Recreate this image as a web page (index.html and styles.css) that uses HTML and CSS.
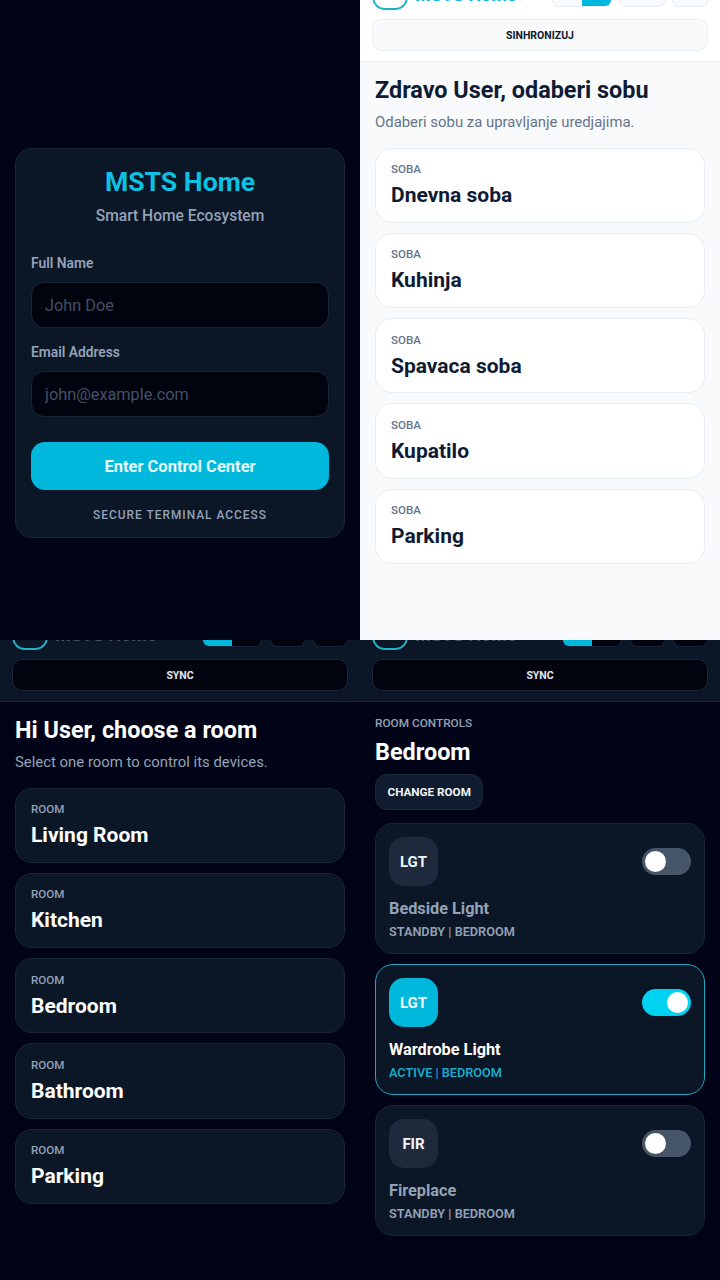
FILE: index.html
```html
<!DOCTYPE html>
<html lang="en">
<head>
    <meta charset="UTF-8">
    <meta name="viewport" content="width=device-width, initial-scale=1.0">
    <title>MSTS Home</title>
    <link rel="stylesheet" href="styles.css">
</head>
<body>
    <div class="grid">
        <!-- Login -->
        <section class="shot login-shot">
            <form class="login-card">
                <h1>MSTS Home</h1>
                <p class="login-sub">Smart Home Ecosystem</p>
                <label for="fullName">Full Name</label>
                <input type="text" id="fullName" placeholder="John Doe">
                <label for="emailAddr">Email Address</label>
                <input type="email" id="emailAddr" placeholder="john@example.com">
                <button type="button" class="enter-btn">Enter Control Center</button>
                <p class="login-foot">SECURE TERMINAL ACCESS</p>
            </form>
        </section>

        <!-- Rooms, light theme -->
        <section class="shot light">
            <header class="topbar">
                <div class="top-row">
                    <div class="brand"><span class="logo"></span><span class="brand-name">MSTS Home</span></div>
                    <div class="top-tools">
                        <div class="lang"><span></span><span class="on"></span></div>
                        <span class="tool tool-wide"></span>
                        <span class="tool"></span>
                    </div>
                </div>
                <button type="button" class="sync">SINHRONIZUJ</button>
            </header>
            <main class="content">
                <h2>Zdravo User, odaberi sobu</h2>
                <p class="hint">Odaberi sobu za upravljanje uredjajima.</p>
                <div class="rooms">
                    <div class="room"><small>SOBA</small><strong>Dnevna soba</strong></div>
                    <div class="room"><small>SOBA</small><strong>Kuhinja</strong></div>
                    <div class="room"><small>SOBA</small><strong>Spavaca soba</strong></div>
                    <div class="room"><small>SOBA</small><strong>Kupatilo</strong></div>
                    <div class="room"><small>SOBA</small><strong>Parking</strong></div>
                </div>
            </main>
        </section>

        <!-- Rooms, dark theme -->
        <section class="shot dark">
            <header class="topbar">
                <div class="top-row">
                    <div class="brand"><span class="logo"></span><span class="brand-name">MSTS Home</span></div>
                    <div class="top-tools">
                        <div class="lang"><span class="on"></span><span></span></div>
                        <span class="tool tool-wide"></span>
                        <span class="tool"></span>
                    </div>
                </div>
                <button type="button" class="sync">SYNC</button>
            </header>
            <main class="content">
                <h2>Hi User, choose a room</h2>
                <p class="hint">Select one room to control its devices.</p>
                <div class="rooms">
                    <div class="room"><small>ROOM</small><strong>Living Room</strong></div>
                    <div class="room"><small>ROOM</small><strong>Kitchen</strong></div>
                    <div class="room"><small>ROOM</small><strong>Bedroom</strong></div>
                    <div class="room"><small>ROOM</small><strong>Bathroom</strong></div>
                    <div class="room"><small>ROOM</small><strong>Parking</strong></div>
                </div>
            </main>
        </section>

        <!-- Room controls -->
        <section class="shot dark">
            <header class="topbar">
                <div class="top-row">
                    <div class="brand"><span class="logo"></span><span class="brand-name">MSTS Home</span></div>
                    <div class="top-tools">
                        <div class="lang"><span class="on"></span><span></span></div>
                        <span class="tool tool-wide"></span>
                        <span class="tool"></span>
                    </div>
                </div>
                <button type="button" class="sync">SYNC</button>
            </header>
            <main class="content controls">
                <p class="eyebrow">ROOM CONTROLS</p>
                <h2>Bedroom</h2>
                <button type="button" class="change-room">CHANGE ROOM</button>
                <div class="devices">
                    <div class="device">
                        <div class="device-top"><span class="badge">LGT</span><span class="switch"></span></div>
                        <h3>Bedside Light</h3>
                        <p>STANDBY | BEDROOM</p>
                    </div>
                    <div class="device active">
                        <div class="device-top"><span class="badge">LGT</span><span class="switch"></span></div>
                        <h3>Wardrobe Light</h3>
                        <p>ACTIVE | BEDROOM</p>
                    </div>
                    <div class="device">
                        <div class="device-top"><span class="badge">FIR</span><span class="switch"></span></div>
                        <h3>Fireplace</h3>
                        <p>STANDBY | BEDROOM</p>
                    </div>
                </div>
            </main>
        </section>
    </div>
</body>
</html>
```

FILE: styles.css
```css
* {
    box-sizing: border-box;
}
body {
    margin: 0;
    font-family: Roboto, "Liberation Sans", sans-serif;
    background-color: #020617;
}
.grid {
    display: grid;
    grid-template-columns: 360px 360px;
    grid-template-rows: 640px 640px;
    width: 720px;
    height: 1280px;
    overflow: hidden;
}
.shot {
    overflow: hidden;
    background: #010416;
}

/* Login */
.login-shot {
    padding: 148px 15px 0;
}
.login-card {
    height: 390px;
    padding: 15px;
    background: #0b1626;
    border: 1px solid #1a2638;
    border-radius: 17px;
}
.login-card h1 {
    margin: 1px 0 0;
    font-size: 26.6px;
    line-height: 34px;
    font-weight: 700;
    text-align: center;
    color: #0cc2e4;
}
.login-sub {
    margin: 7px 0 0;
    font-size: 15.6px;
    line-height: 20px;
    font-weight: 500;
    text-align: center;
    color: #94a3b8;
}
.login-card label {
    display: block;
    margin-bottom: 10px;
    font-size: 13.8px;
    line-height: 18px;
    font-weight: 600;
    color: #94a3b8;
}
.login-sub + label {
    margin-top: 28px;
}
.login-card input {
    display: block;
    width: 100%;
    height: 46px;
    margin-bottom: 15px;
    padding: 0 13px;
    font-family: inherit;
    font-size: 16.3px;
    color: #fff;
    background: #01030f;
    border: 1px solid #1a2638;
    border-radius: 13px;
}
.login-card input::placeholder {
    color: #434f63;
}
.enter-btn {
    display: block;
    width: 100%;
    height: 48px;
    margin-top: 25px;
    font-family: inherit;
    font-size: 16.5px;
    font-weight: 700;
    color: #e6fbff;
    background: #00b8db;
    border: none;
    border-radius: 14px;
}
.login-foot {
    margin: 17px 0 0;
    font-size: 11.9px;
    line-height: 16px;
    font-weight: 500;
    letter-spacing: 1px;
    text-align: center;
    color: #94a3b8;
}

/* Top bar */
.topbar {
    height: 62px;
    padding: 0 12px;
    background: #fff;
    border-bottom: 1px solid #e8edf3;
}
.dark .topbar {
    background: #0b1626;
    border-bottom-color: #1a2638;
}
.top-row {
    display: flex;
    align-items: flex-end;
    justify-content: space-between;
    height: 7px;
}
.brand {
    display: flex;
    align-items: flex-end;
    gap: 7px;
    height: 100%;
}
.logo {
    display: block;
    flex: none;
    width: 36px;
    height: 36px;
    margin-bottom: -3px;
    border: 2px solid #1fb3c9;
    border-radius: 13px;
}
.brand-name {
    font-size: 18px;
    line-height: 22px;
    font-weight: 700;
    margin-bottom: 1px;
    color: #00b8db;
}
.dark .brand-name {
    color: #475569;
}
.top-tools {
    display: flex;
    gap: 7px;
    height: 7px;
}
.dark .top-tools {
    gap: 8px;
}
.lang {
    display: flex;
    width: 60px;
    height: 100%;
    overflow: hidden;
    background: #f8fafc;
    border: 1px solid #e8edf3;
    border-top: none;
    border-radius: 0 0 10px 10px;
}
.lang span {
    flex: 1;
}
.lang .on {
    background: #00b8db;
}
.tool {
    display: block;
    width: 36px;
    height: 100%;
    background: #f8fafc;
    border: 1px solid #e8edf3;
    border-top: none;
    border-radius: 0 0 10px 10px;
}
.tool-wide {
    width: 46px;
}
.dark .tool {
    width: 35px;
}
.dark .lang,
.dark .tool {
    background: #01030f;
    border-color: #1a2638;
}
.sync {
    display: block;
    width: 100%;
    height: 32px;
    margin-top: 12px;
    font-family: inherit;
    font-size: 10.5px;
    font-weight: 700;
    color: #0f172a;
    background: #f8fafc;
    border: 1px solid #e8edf3;
    border-radius: 10px;
}
.dark .sync {
    color: #e2e8f0;
    background: #01030f;
    border-color: #1a2638;
}

/* Room list */
.light {
    background: #f8fafc;
}
.content {
    padding: 13px 15px 0;
}
.content h2 {
    margin: 0;
    font-size: 23.4px;
    line-height: 30px;
    font-weight: 700;
    color: #fff;
}
.light .content h2 {
    color: #0f1b33;
}
.hint {
    margin: 7px 0 0;
    font-size: 14.9px;
    line-height: 20px;
    color: #94a3b8;
}
.light .hint {
    color: #64748b;
}
.rooms {
    display: flex;
    flex-direction: column;
    gap: 10px;
    margin-top: 15.5px;
}
.room {
    height: 75.3px;
    padding: 13.5px 15px 0;
    background: #0b1626;
    border: 1px solid #1a2638;
    border-radius: 17px;
}
.light .room {
    background: #fff;
    border-color: #e8edf3;
}
.room small {
    display: block;
    font-size: 11.6px;
    line-height: 14px;
    font-weight: 500;
    color: #94a3b8;
}
.light .room small {
    color: #64748b;
}
.room strong {
    display: block;
    margin-top: 6px;
    font-size: 21px;
    line-height: 27px;
    font-weight: 700;
    color: #fff;
}
.light .room strong {
    color: #0f1b33;
}

/* Room controls */
.controls {
    padding-top: 14px;
}
.eyebrow {
    margin: 0;
    font-size: 11.8px;
    line-height: 14px;
    font-weight: 500;
    color: #94a3b8;
}
.controls h2 {
    margin-top: 7px;
}
.change-room {
    display: block;
    height: 36px;
    margin-top: 7px;
    padding: 0 11.5px;
    font-family: inherit;
    font-size: 11.7px;
    font-weight: 700;
    color: #f1f5f9;
    background: #0f1b2e;
    border: 1px solid #1a2638;
    border-radius: 12px;
}
.devices {
    display: flex;
    flex-direction: column;
    gap: 10px;
    margin-top: 13px;
}
.device {
    height: 131px;
    padding: 13px 13px 0;
    background: #0b1626;
    border: 1px solid #1a2638;
    border-radius: 18px;
}
.device-top {
    display: flex;
    align-items: center;
    justify-content: space-between;
}
.badge {
    display: flex;
    align-items: center;
    justify-content: center;
    width: 49px;
    height: 49px;
    font-size: 15px;
    font-weight: 700;
    color: #f1f5f9;
    background: #1e293b;
    border-radius: 15px;
}
.switch {
    display: block;
    position: relative;
    width: 49px;
    height: 27px;
    background: #475569;
    border-radius: 14px;
}
.switch::after {
    content: "";
    position: absolute;
    top: 3px;
    left: 3px;
    width: 21px;
    height: 21px;
    background: #fff;
    border-radius: 50%;
}
.device h3 {
    margin: 12px 0 0;
    font-size: 16.3px;
    line-height: 22px;
    font-weight: 700;
    color: #94a3b8;
}
.device p {
    margin: 4px 0 0;
    font-size: 12.7px;
    line-height: 16px;
    font-weight: 600;
    color: #94a3b8;
}
.device.active {
    border-color: #22a5c0;
}
.device.active .badge {
    background: #00b8db;
}
.device.active .switch {
    background: #00d3f2;
}
.device.active .switch::after {
    left: 25px;
}
.device.active h3 {
    color: #fff;
}
.device.active p {
    color: #1aa8c8;
}
```
